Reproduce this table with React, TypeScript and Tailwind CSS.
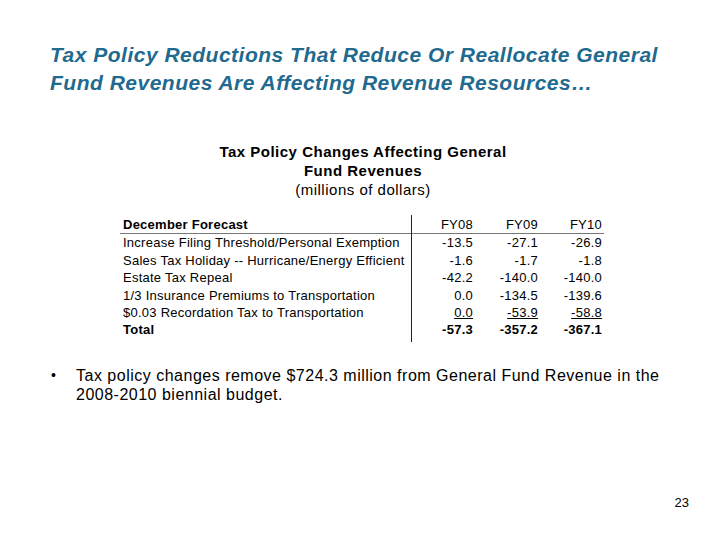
import React from "react";

const rows: [string, string, string, string][] = [
  ["Increase Filing Threshold/Personal Exemption", "-13.5", "-27.1", "-26.9"],
  ["Sales Tax Holiday -- Hurricane/Energy Efficient", "-1.6", "-1.7", "-1.8"],
  ["Estate Tax Repeal", "-42.2", "-140.0", "-140.0"],
  ["1/3 Insurance Premiums to Transportation", "0.0", "-134.5", "-139.6"],
];

export default function App() {
  return (
    <div
      className="w-[720px] h-[540px] bg-white relative overflow-hidden text-black"
      style={{ fontFamily: '"Liberation Sans", Arial, sans-serif' }}
    >
      <div className="pt-[41px] pl-[50px]">
        <h1 className="text-[21px] leading-[28px] font-bold italic tracking-[0.5px] text-[#1f6a8e] whitespace-nowrap">
          Tax Policy Reductions That Reduce Or Reallocate General
          <br />
          Fund Revenues Are Affecting Revenue Resources…
        </h1>
      </div>
      <div className="mt-[45px] flex flex-col items-center pl-[6px] text-[15px] leading-[19px] tracking-[0.5px]">
        <div className="font-bold">Tax Policy Changes Affecting General</div>
        <div className="font-bold">Fund Revenues</div>
        <div>(millions of dollars)</div>
      </div>
      <div className="mt-[17px] ml-[120px] w-[484px] text-[13px] leading-[17.4px] tracking-[0.25px] relative">
        <div className="absolute left-[291px] top-[-1px] bottom-[-3px] w-px bg-[#222]" />
        <div className="flex border-b border-[#777] pl-[3px]">
          <div className="w-[288px] font-bold">December Forecast</div>
          <div className="w-[62px] text-right">FY08</div>
          <div className="w-[65px] text-right">FY09</div>
          <div className="w-[64px] text-right">FY10</div>
        </div>
        {rows.map((r) => (
          <div key={r[0]} className="flex pl-[3px]">
            <div className="w-[288px] whitespace-nowrap">{r[0]}</div>
            <div className="w-[62px] text-right">{r[1]}</div>
            <div className="w-[65px] text-right">{r[2]}</div>
            <div className="w-[64px] text-right">{r[3]}</div>
          </div>
        ))}
        <div className="flex pl-[3px]">
          <div className="w-[288px] whitespace-nowrap">$0.03 Recordation Tax to Transportation</div>
          <div className="w-[62px] text-right"><span className="underline">0.0</span></div>
          <div className="w-[65px] text-right"><span className="underline">-53.9</span></div>
          <div className="w-[64px] text-right"><span className="underline">-58.8</span></div>
        </div>
        <div className="flex pl-[3px] font-bold">
          <div className="w-[288px]">Total</div>
          <div className="w-[62px] text-right">-57.3</div>
          <div className="w-[65px] text-right">-357.2</div>
          <div className="w-[64px] text-right">-367.1</div>
        </div>
      </div>
      <div className="mt-[27px] ml-[51px] flex text-[16px] leading-[19px] tracking-[0.5px]">
        <div className="w-[25px] text-[14px]">•</div>
        <div className="w-[620px] whitespace-nowrap">
          Tax policy changes remove $724.3 million from General Fund Revenue in the
          <br />
          2008-2010 biennial budget.
        </div>
      </div>
      <div className="absolute right-[31px] bottom-[28px] text-[13px]">23</div>
    </div>
  );
}
